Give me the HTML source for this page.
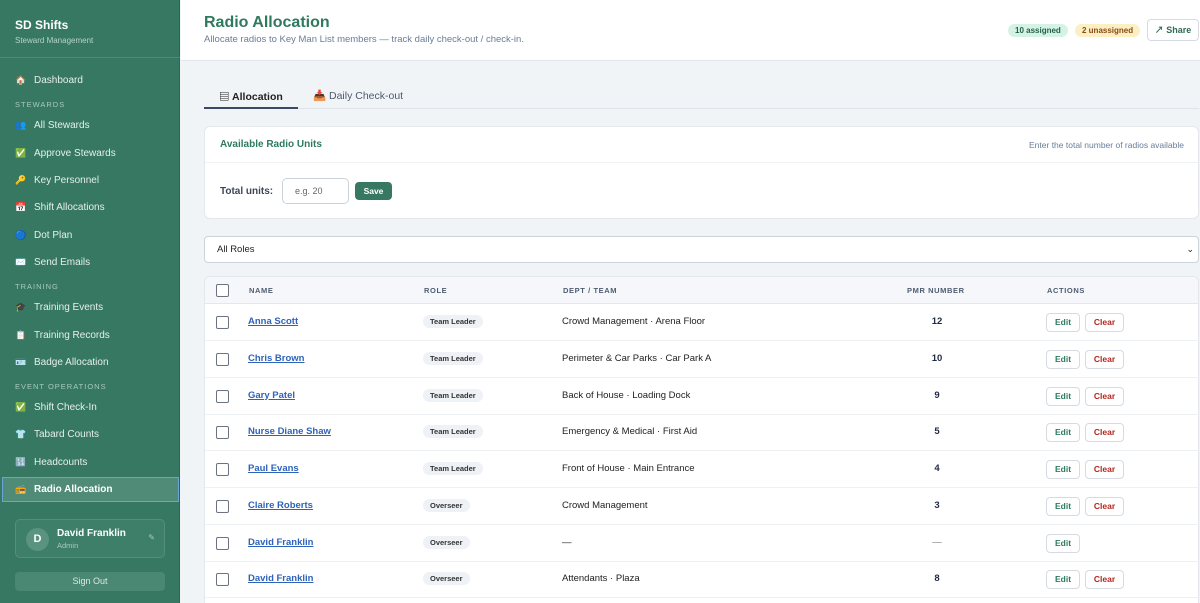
<!DOCTYPE html>
<html><head><meta charset="utf-8"><style>
*{box-sizing:border-box;margin:0;padding:0}
html,body{width:1200px;height:603px;overflow:hidden}
body{font-family:"Liberation Sans","Noto Sans CJK SC",sans-serif;background:#f1f4f7;position:relative}
.sb{position:absolute;left:0;top:0;width:180px;height:603px;background:#367862;color:#e8f1ee;border-right:1px solid #2d6553}
.sb .t{position:absolute;left:15px;top:18px;font-weight:bold;font-size:12px;color:#fff}
.sb .st{position:absolute;left:15px;top:36px;font-size:8px;color:#b7d2c9}
.sb .hr{position:absolute;left:0;top:57px;width:180px;border-top:1px solid #4c8b77}
.it{position:absolute;left:15px;font-size:10px;color:#e6efec;height:14px;line-height:14px;white-space:nowrap}
.it i{font-style:normal;display:inline-block;width:19px;font-size:9px}
.sec{position:absolute;left:15px;font-size:7.5px;letter-spacing:1px;color:#a9c9be}
.act{position:absolute;left:2px;top:477px;width:177px;height:25px;background:#4f8b77;border:1.5px solid #6aa3d6}
.uc{position:absolute;left:15px;top:519px;width:150px;height:39px;border:1px solid #558f7c;border-radius:5px;background:#3d7f69}
.av{position:absolute;left:10px;top:8px;width:23px;height:23px;border-radius:50%;background:#5a9380;color:#fff;font-size:11px;font-weight:bold;text-align:center;line-height:23px}
.so{position:absolute;left:15px;top:572px;width:150px;height:19px;border-radius:4px;background:#4a8873;text-align:center;font-size:9px;line-height:19px;color:#dde9e5}
.hd{position:absolute;left:181px;top:0;right:0;height:61px;background:#fff;border-bottom:1px solid #e1e5ea}
.hd h1{position:absolute;left:23px;top:14px;font-size:16px;color:#2f7a5f}
.hd p{position:absolute;left:23px;top:34px;font-size:9.5px;color:#6a7d98}
.pill{position:absolute;top:24px;height:13px;line-height:13px;border-radius:7px;font-size:8px;font-weight:bold;padding:0 7px}
.share{position:absolute;left:1147px;top:19px;width:52px;height:22px;border:1px solid #d5dbe1;border-radius:4px;font-size:9px;font-weight:bold;color:#2f6b58;text-align:center;line-height:20px;background:#fff}
.tab{position:absolute;top:89px;font-size:10.5px;color:#4d5a6e}
.card{position:absolute;left:204px;top:126px;width:995px;height:93px;background:#fff;border:1px solid #e4e8ed;border-radius:6px}
.sel{position:absolute;left:204px;top:236px;width:995px;height:27px;background:#fff;border:1px solid #ccd3db;border-radius:4px;font-size:9.5px;line-height:25px;padding-left:12px;color:#222}
.tbl{position:absolute;left:204px;top:276px;width:995px;height:340px;background:#fff;border:1px solid #e4e8ed;border-radius:6px;overflow:hidden}
.th{position:absolute;left:0;top:0;width:100%;height:27px;background:#f5f7fa;border-bottom:1px solid #e4e8ed}
.c{position:absolute;font-size:9.5px;color:#222;white-space:nowrap}
.h{font-size:7.5px;font-weight:bold;letter-spacing:.6px;color:#4f5d70;top:9px}
.cb{position:absolute;left:11px;width:13px;height:13px;border:1px solid #6b7280;border-radius:2px;background:#fff}
.row{position:absolute;left:0;width:100%;height:37px;border-bottom:1px solid #eef1f4}
.nm{color:#2f63b8;font-weight:bold;text-decoration:underline}
.rl{background:#eef1f5;border-radius:7px;padding:2px 7px;font-size:7.5px;font-weight:bold;color:#333}
.b{position:absolute;height:19px;border:1px solid #d5dbe1;border-radius:4px;font-size:8.5px;font-weight:bold;text-align:center;line-height:17px;background:#fff}
</style></head><body>
<div class="sb">
<div class="t">SD Shifts</div><div class="st">Steward Management</div><div class="hr"></div>
<div class="act"></div>
<div class="it" style="top:73px"><i>🏠</i>Dashboard</div>
<div class="sec" style="top:100px">STEWARDS</div>
<div class="it" style="top:118px"><i>👥</i>All Stewards</div>
<div class="it" style="top:146px"><i>✅</i>Approve Stewards</div>
<div class="it" style="top:173px"><i>🔑</i>Key Personnel</div>
<div class="it" style="top:200px"><i>📅</i>Shift Allocations</div>
<div class="it" style="top:228px"><i>🔵</i>Dot Plan</div>
<div class="it" style="top:255px"><i>✉️</i>Send Emails</div>
<div class="sec" style="top:282px">TRAINING</div>
<div class="it" style="top:300px"><i>🎓</i>Training Events</div>
<div class="it" style="top:328px"><i>📋</i>Training Records</div>
<div class="it" style="top:355px"><i>🪪</i>Badge Allocation</div>
<div class="sec" style="top:382px">EVENT OPERATIONS</div>
<div class="it" style="top:400px"><i>✅</i>Shift Check-In</div>
<div class="it" style="top:427px"><i>👕</i>Tabard Counts</div>
<div class="it" style="top:455px"><i>🔢</i>Headcounts</div>
<div class="it" style="top:482px;font-weight:bold;color:#fff"><i>📻</i>Radio Allocation</div>
<div class="uc"><div class="av">D</div><div style="position:absolute;left:41px;top:8px;font-size:10px;font-weight:bold;color:#fff">David Franklin</div><div style="position:absolute;left:41px;top:21px;font-size:7.5px;color:#a9c9be">Admin</div><div style="position:absolute;right:9px;top:13px;font-size:8px;color:#a9c9be">✎</div></div>
<div class="so">Sign Out</div>
</div>
<div class="hd"><h1>Radio Allocation</h1><p>Allocate radios to Key Man List members — track daily check-out / check-in.</p></div>
<div class="pill" style="left:1008px;background:#d5f3e4;color:#24614c">10 assigned</div>
<div class="pill" style="left:1075px;background:#fcefc4;color:#8a4b12">2 unassigned</div>
<div class="share">↗ Share</div>
<div class="tab" style="left:219px;font-weight:bold;color:#222">▤ Allocation</div>
<div class="tab" style="left:313px">📥 Daily Check-out</div>
<div style="position:absolute;left:204px;top:108px;width:995px;border-top:1px solid #dfe4ea"></div>
<div style="position:absolute;left:204px;top:107px;width:94px;height:2px;background:#3b4a63"></div>
<div class="card">
<div style="position:absolute;left:15px;top:12px;font-size:10px;font-weight:bold;color:#2f7a5f">Available Radio Units</div>
<div style="position:absolute;right:14px;top:13px;font-size:8.5px;color:#6a7d98">Enter the total number of radios available</div>
<div style="position:absolute;left:0;top:35px;width:100%;border-top:1px solid #f0f2f5"></div>
<div style="position:absolute;left:15px;top:59px;font-size:10px;font-weight:bold;color:#3d4658">Total units:</div>
<div style="position:absolute;left:77px;top:51px;width:67px;height:26px;border:1px solid #ccd3db;border-radius:5px;font-size:9px;color:#666;line-height:24px;padding-left:12px">e.g. 20</div>
<div style="position:absolute;left:150px;top:55px;width:37px;height:18px;background:#367862;border-radius:4px;color:#fff;font-size:8.5px;font-weight:bold;text-align:center;line-height:18px">Save</div>
</div>
<div class="sel">All Roles<span style="position:absolute;right:4px;top:0;font-size:9px">⌄</span></div>
<div class="tbl">
<div class="th"><div class="cb" style="top:7px"></div>
<div class="c h" style="left:44px">NAME</div><div class="c h" style="left:219px">ROLE</div><div class="c h" style="left:358px">DEPT / TEAM</div><div class="c h" style="left:702px">PMR NUMBER</div><div class="c h" style="left:842px">ACTIONS</div></div>
</div>
<div id="rows"></div>
<script>
const d=[["Anna Scott","Team Leader","Crowd Management · Arena Floor","12"],["Chris Brown","Team Leader","Perimeter &amp; Car Parks · Car Park A","10"],["Gary Patel","Team Leader","Back of House · Loading Dock","9"],["Nurse Diane Shaw","Team Leader","Emergency &amp; Medical · First Aid","5"],["Paul Evans","Team Leader","Front of House · Main Entrance","4"],["Claire Roberts","Overseer","Crowd Management","3"],["David Franklin","Overseer","—",""],["David Franklin","Overseer","Attendants · Plaza","8"]];
let h="";d.forEach((r,i)=>{const t=304+i*36.75;
h+=`<div class="row" style="position:absolute;left:205px;width:994px;top:${t}px"><div class="cb" style="top:12px"></div><div class="c nm" style="left:43px;top:12px">${r[0]}</div><div class="c" style="left:218px;top:12px"><span class="rl">${r[1]}</span></div><div class="c" style="left:357px;top:12px">${r[2]}</div><div class="c" style="left:722px;width:20px;text-align:center;top:12px;font-weight:bold;color:${r[3]?'#1f2a44':'#aaa'}">${r[3]||'—'}</div><div class="b" style="left:841px;top:9px;width:34px;color:#2f7a5f">Edit</div>${r[3]?'<div class="b" style="left:880px;top:9px;width:39px;color:#b3261e">Clear</div>':''}</div>`});
document.getElementById("rows").innerHTML=h;
</script>
</body></html>
